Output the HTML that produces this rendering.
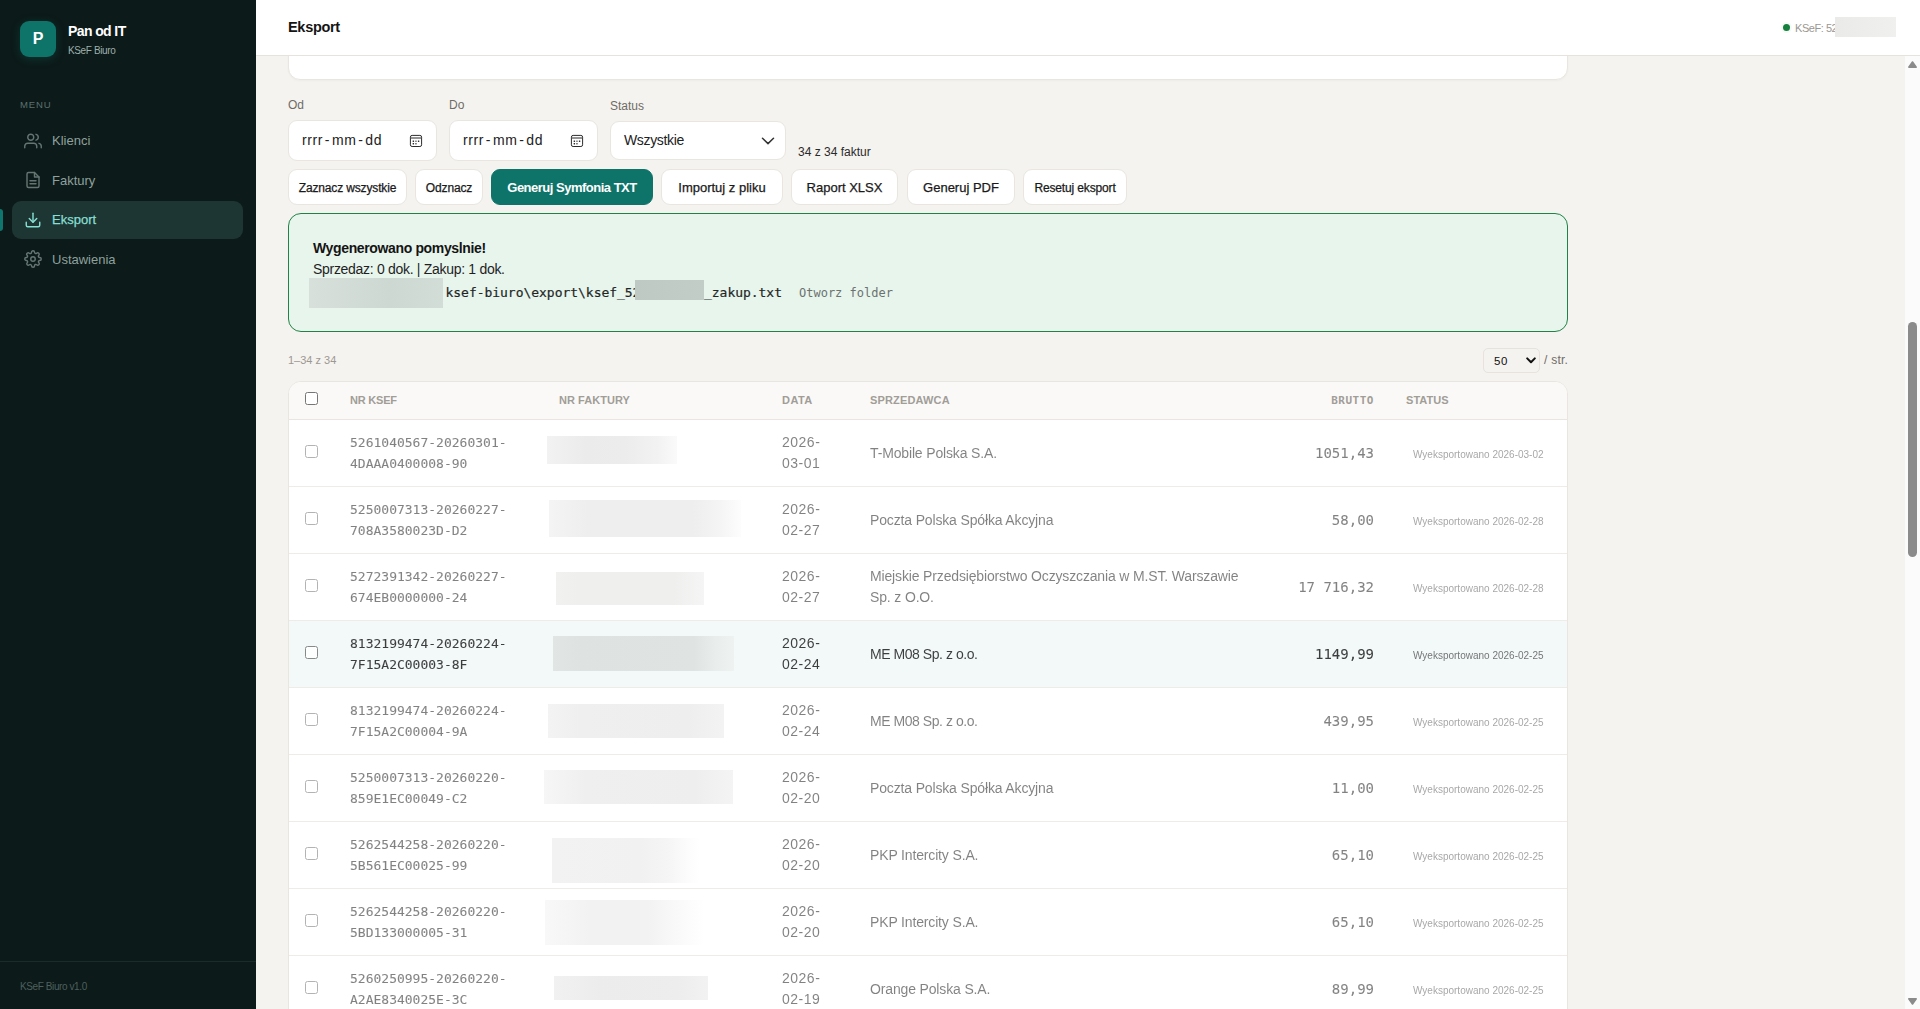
<!DOCTYPE html>
<html lang="pl">
<head>
<meta charset="utf-8">
<title>KSeF Biuro - Eksport</title>
<style>
*{box-sizing:border-box;margin:0;padding:0}
html,body{width:1920px;height:1009px;overflow:hidden}
body{position:relative;background:#f5f3ef;font-family:"Liberation Sans",sans-serif;color:#1a1a1a;font-size:14px}
.abs{position:absolute;white-space:nowrap}
.mono{font-family:"DejaVu Sans Mono","Liberation Mono",monospace}

/* sidebar */
#side{position:absolute;left:0;top:0;width:256px;height:1009px;background:#0c1a19}
#logo{position:absolute;left:20px;top:21px;width:36px;height:36px;border-radius:9px;background:#0e7369;color:#fff;font-weight:700;font-size:16px;line-height:35px;text-align:center;box-shadow:0 2px 10px rgba(15,118,110,.3)}
#brand{left:68px;top:21.5px;font-size:14px;font-weight:700;color:#fff;line-height:18px;letter-spacing:-.6px}
#brand2{left:68px;top:44.5px;font-size:10px;color:#9db0ac;line-height:12px;letter-spacing:-.38px}
#menu{left:20px;top:98.5px;font-size:9.5px;letter-spacing:.85px;color:#5d716e;line-height:12px}
.nav{position:absolute;left:12px;width:231px;height:38px;border-radius:9px;color:#8ea19d;font-size:13px;line-height:38px;padding-left:40px}
.nav svg{position:absolute;left:12px;top:10px;width:18px;height:18px;fill:none;stroke:currentColor;stroke-width:1.9;stroke-linecap:round;stroke-linejoin:round;opacity:.68}
.nav.act svg{opacity:1}
.nav.act{background:#1d3533;color:#86dfd2;font-weight:400;-webkit-text-stroke:.25px #86dfd2}
#bar{position:absolute;left:0;top:209px;width:3px;height:22px;background:#0f766e;border-radius:0 3px 3px 0}
#sfoot{position:absolute;left:0;top:961px;width:256px;height:48px;border-top:1px solid #1a2c2a}
#sfoot span{position:absolute;left:20px;top:18.5px;font-size:10px;color:#4d605d;line-height:12px;letter-spacing:-.4px}

/* header */
#head{position:absolute;left:256px;top:0;width:1664px;height:56px;background:#fff;border-bottom:1px solid #e6e2dc}
#title{left:32px;top:17px;font-size:14.5px;font-weight:700;line-height:20px;color:#151515;letter-spacing:-.3px}
#dot{position:absolute;left:1527px;top:24px;width:7px;height:7px;border-radius:50%;background:#15803d;box-shadow:0 0 0 2px rgba(21,128,61,.04)}
#ksef{left:1539px;top:20.5px;font-size:11px;line-height:14px;color:#9a9792;letter-spacing:-.45px}
#kblur{position:absolute;left:1579px;top:17px;width:61px;height:20px;background:linear-gradient(90deg,#eaeae8,#f0f0ef)}

/* scrollbar */
#sb{position:absolute;left:1905px;top:56px;width:15px;height:953px;background:#fbfbfb}
#sb svg{position:absolute;left:3px;width:9px;height:7px;fill:#8b8b8b;stroke:#8b8b8b;stroke-width:1.6;stroke-linejoin:round}
#sb b{position:absolute;left:3px;top:266px;width:9px;height:235px;border-radius:5px;background:#8b8b8b}

/* top card */
#card0{position:absolute;left:288px;top:40px;width:1280px;height:40px;background:#fff;border:1px solid #e9e6e0;border-radius:12px;box-shadow:0 1px 2px rgba(0,0,0,.03)}

/* filters */
.lbl{font-size:12px;line-height:14px;color:#6f6b66}
.inp{position:absolute;height:41px;background:#fff;border:1px solid #e9e6e0;border-radius:9px}
.inp span{position:absolute;left:13px;top:11px;font-size:14px;line-height:16px;color:#222;letter-spacing:.6px;white-space:nowrap}
.inp span i{font-style:normal;margin:0 1.8px}
.inp svg{position:absolute;left:120px;top:13px;width:14px;height:14px}
.btn{position:absolute;top:169px;height:36px;padding-top:1px;background:#fff;border:1px solid #e9e6e0;border-radius:9px;font-size:13px;line-height:34px;text-align:center;color:#1a1a1a;white-space:nowrap;-webkit-text-stroke:.25px #1a1a1a}
.btn.sm{font-size:12px;letter-spacing:-.15px}
.btn.pri{background:#0e746a;border-color:#0e746a;color:#fff;font-weight:700;letter-spacing:-.5px;-webkit-text-stroke:0}

/* success box */
#ok{position:absolute;left:288px;top:213px;width:1280px;height:119px;border:1px solid #1f8346;border-radius:13px;background:#e8f5ed}
#ok .t1{left:24px;top:25px;font-size:14px;font-weight:700;line-height:18px;color:#141414;letter-spacing:-.36px}
#ok .t2{left:24px;top:46px;font-size:14px;line-height:18px;color:#1f1f1f;letter-spacing:-.3px}
#ok .t3{top:70px;font-size:13px;line-height:18px;color:#1f2725;letter-spacing:-.03px;-webkit-text-stroke:.2px #1f2725}
#ok .t4{left:510px;top:70px;font-size:12px;line-height:18px;color:#6b726f}
.gb{position:absolute;background:#d2dcd5}

/* pager */
#pg1{left:288px;top:353px;font-size:11px;line-height:14px;color:#9c9892}
#sel{position:absolute;left:1483px;top:348px;width:57px;height:25px;border:1px solid #e6e3dd;border-radius:5px;background:#f5f3ef}
#sel span{position:absolute;left:10px;top:4.5px;font-size:11.5px;line-height:14px;color:#111;letter-spacing:.5px}
#sel svg{position:absolute;left:42px;top:8px;width:10px;height:7px}
#pg2{left:1544px;top:353px;font-size:12px;line-height:14px;color:#6f6b66;letter-spacing:.25px}

/* table */
#tbl{position:absolute;left:288px;top:381px;width:1280px;height:700px;background:#fff;border:1px solid #e9e6e0;border-radius:13px;overflow:hidden}
#th{position:absolute;left:0;top:0;width:1278px;height:38px;background:#faf9f7;border-bottom:1px solid #e9e5df}
#th span{position:absolute;top:12px;font-size:11px;font-weight:700;line-height:12px;color:#a19d97;letter-spacing:.45px;white-space:nowrap}
.cb{position:absolute;left:16px;top:25px;width:13px;height:13px;border:1px solid #767676;border-radius:2.5px;background:#fff}
.row{position:absolute;left:0;width:1278px;height:67px;border-bottom:1px solid #efece7}
.row > div,.row > .cb{opacity:.55;will-change:opacity}
.row.hov{background:#f3f9f9}
.row.hov > div,.row.hov > .cb{opacity:.85}
.row > div{position:absolute;white-space:nowrap;color:#1c1c1c}
.ksef{left:61px;top:12px;font-family:"DejaVu Sans Mono","Liberation Mono",monospace;font-size:13px;line-height:21px;-webkit-text-stroke:.1px #1c1c1c}
.date{left:493px;top:12px;font-size:14px;line-height:21px;letter-spacing:.5px}
.seller{left:581px;font-size:14px;line-height:21px;letter-spacing:-.15px}
.seller.one{top:23px}
.seller.two{top:12px}
.brutto{right:193px;top:23px;font-family:"DejaVu Sans Mono","Liberation Mono",monospace;font-size:14px;line-height:21px;text-align:right;-webkit-text-stroke:.1px #1c1c1c}
.stat{left:1124px;top:28px;font-size:10px;line-height:14px;color:#5e5e5e !important;letter-spacing:0}
.blur{position:absolute}
</style>
</head>
<body>

<div id="card0"></div>

<div id="head">
  <div class="abs" id="title">Eksport</div>
  <span id="dot"></span>
  <div class="abs" id="ksef">KSeF: 52</div>
  <span id="kblur"></span>
</div>

<div id="side">
  <div id="logo">P</div>
  <div class="abs" id="brand">Pan od IT</div>
  <div class="abs" id="brand2">KSeF Biuro</div>
  <div class="abs" id="menu">MENU</div>
  <div class="nav" style="top:122px"><svg viewBox="0 0 24 24"><path d="M17 21v-2a4 4 0 0 0-4-4H5a4 4 0 0 0-4 4v2"/><circle cx="9" cy="7" r="4"/><path d="M23 21v-2a4 4 0 0 0-3-3.87"/><path d="M16 3.13a4 4 0 0 1 0 7.75"/></svg>Klienci</div>
  <div class="nav" style="top:161px"><svg viewBox="0 0 24 24"><path d="M14 2H6a2 2 0 0 0-2 2v16a2 2 0 0 0 2 2h12a2 2 0 0 0 2-2V8z"/><path d="M14 2v6h6"/><path d="M16 13H8"/><path d="M16 17H8"/></svg><span style="position:relative;top:1px">Faktury</span></div>
  <div class="nav act" style="top:201px"><svg viewBox="0 0 24 24"><path d="M21 15v4a2 2 0 0 1-2 2H5a2 2 0 0 1-2-2v-4"/><path d="M7 10l5 5 5-5"/><path d="M12 15V3"/></svg>Eksport</div>
  <div class="nav" style="top:240.5px"><svg viewBox="0 0 24 24" style="top:9px"><circle cx="12" cy="12" r="3"/><path d="M19.4 15a1.65 1.65 0 0 0 .33 1.82l.06.06a2 2 0 1 1-2.83 2.83l-.06-.06a1.65 1.65 0 0 0-1.82-.33 1.65 1.65 0 0 0-1 1.51V21a2 2 0 1 1-4 0v-.09A1.65 1.65 0 0 0 9 19.4a1.65 1.65 0 0 0-1.82.33l-.06.06a2 2 0 1 1-2.83-2.83l.06-.06a1.65 1.65 0 0 0 .33-1.82 1.65 1.65 0 0 0-1.51-1H3a2 2 0 1 1 0-4h.09A1.65 1.65 0 0 0 4.6 9a1.65 1.65 0 0 0-.33-1.82l-.06-.06a2 2 0 1 1 2.83-2.83l.06.06a1.65 1.65 0 0 0 1.82.33H9a1.65 1.65 0 0 0 1-1.51V3a2 2 0 1 1 4 0v.09a1.65 1.65 0 0 0 1 1.51 1.65 1.65 0 0 0 1.82-.33l.06-.06a2 2 0 1 1 2.83 2.83l-.06.06a1.65 1.65 0 0 0-.33 1.82V9a1.65 1.65 0 0 0 1.51 1H21a2 2 0 1 1 0 4h-.09a1.65 1.65 0 0 0-1.51 1z"/></svg>Ustawienia</div>
  <span id="bar"></span>
  <div id="sfoot"><span>KSeF Biuro v1.0</span></div>
</div>

<!-- filters -->
<div class="abs lbl" style="left:288px;top:98px">Od</div>
<div class="abs lbl" style="left:449px;top:98px">Do</div>
<div class="abs lbl" style="left:610px;top:99px">Status</div>
<div class="inp" style="left:288px;top:120px;width:149px"><span>rrrr<i>-</i>mm<i>-</i>dd</span><svg viewBox="0 0 14 14"><rect x="1.4" y="1.4" width="11.2" height="11.1" rx="1.7" fill="none" stroke="#2b2b2b" stroke-width="1"/><rect x="1.9" y="3.2" width="10.2" height="1.6" fill="#7a7a7a"/><g fill="#2b2b2b"><rect x="3.6" y="6.4" width="1.5" height="1.6" rx=".4"/><rect x="6.2" y="6.4" width="1.5" height="1.6" rx=".4" fill="#666"/><rect x="8.85" y="6.4" width="1.5" height="1.6" rx=".4"/><rect x="3.6" y="8.9" width="1.5" height="1.6" rx=".4"/><rect x="6.2" y="8.9" width="1.5" height="1.6" rx=".4" fill="#555"/></g></svg></div>
<div class="inp" style="left:449px;top:120px;width:149px"><span>rrrr<i>-</i>mm<i>-</i>dd</span><svg viewBox="0 0 14 14"><rect x="1.4" y="1.4" width="11.2" height="11.1" rx="1.7" fill="none" stroke="#2b2b2b" stroke-width="1"/><rect x="1.9" y="3.2" width="10.2" height="1.6" fill="#7a7a7a"/><g fill="#2b2b2b"><rect x="3.6" y="6.4" width="1.5" height="1.6" rx=".4"/><rect x="6.2" y="6.4" width="1.5" height="1.6" rx=".4" fill="#666"/><rect x="8.85" y="6.4" width="1.5" height="1.6" rx=".4"/><rect x="3.6" y="8.9" width="1.5" height="1.6" rx=".4"/><rect x="6.2" y="8.9" width="1.5" height="1.6" rx=".4" fill="#555"/></g></svg></div>
<div class="inp" style="left:610px;top:121px;width:176px;height:39px"><span style="letter-spacing:-.35px;left:13px;top:10px">Wszystkie</span><svg viewBox="0 0 14 8" style="left:150px;top:15px;width:14px;height:8px"><path d="M1.5 1.2 7 6.6l5.5-5.4" fill="none" stroke="#333" stroke-width="1.5" stroke-linecap="round" stroke-linejoin="round"/></svg></div>
<div class="abs" style="left:798px;top:145px;font-size:12px;line-height:14px;color:#2a2a2a">34 z 34 faktur</div>

<div class="btn sm" style="left:288px;width:119px">Zaznacz wszystkie</div>
<div class="btn sm" style="left:415px;width:68px">Odznacz</div>
<div class="btn pri" style="left:491px;width:162px">Generuj Symfonia TXT</div>
<div class="btn" style="left:661px;width:122px">Importuj z pliku</div>
<div class="btn" style="left:791px;width:107px">Raport XLSX</div>
<div class="btn" style="left:907px;width:108px">Generuj PDF</div>
<div class="btn sm" style="left:1023px;width:104px">Resetuj eksport</div>

<!-- success -->
<div id="ok">
  <div class="abs t1">Wygenerowano pomyslnie!</div>
  <div class="abs t2">Sprzedaz: 0 dok. | Zakup: 1 dok.</div>
  <div class="abs t3 mono" style="left:156.5px">ksef-biuro\export\ksef_52</div>
  <div class="abs t3 mono" style="left:415px">_zakup.txt</div>
  <div class="abs t4 mono">Otworz folder</div>
  <span class="gb" style="left:20px;top:64px;width:134px;height:30px;background:linear-gradient(90deg,#d7e0da,#ced8d2 60%,#d3ddd7)"></span>
  <span class="gb" style="left:346px;top:66px;width:69px;height:20px;background:linear-gradient(90deg,#bfc9c3,#c3cdc7)"></span>
</div>

<!-- pager -->
<div class="abs" id="pg1">1–34 z 34</div>
<div id="sel"><span>50</span><svg viewBox="0 0 10 7"><path d="M1.2 1.4 5 5.3l3.8-3.9" fill="none" stroke="#111" stroke-width="2" stroke-linecap="round" stroke-linejoin="round"/></svg></div>
<div class="abs" id="pg2">/ str.</div>

<!-- table -->
<div id="tbl">
  <div id="th">
    <span class="cb" style="top:10px;left:16px;position:absolute"></span>
    <span style="left:61px;letter-spacing:-.2px">NR KSEF</span>
    <span style="left:270px;letter-spacing:.05px">NR FAKTURY</span>
    <span style="left:493px">DATA</span>
    <span style="left:581px;letter-spacing:.15px">SPRZEDAWCA</span>
    <span class="mono" style="right:193px;top:13px;letter-spacing:.5px;font-weight:700">BRUTTO</span>
    <span style="left:1117px;letter-spacing:.05px">STATUS</span>
  </div>
<div class="row" style="top:38px"><span class="cb"></span><div class="ksef">5261040567-20260301-<br>4DAAA0400008-90</div><span class="blur" style="left:258px;top:16px;width:130px;height:28px;background:linear-gradient(90deg,#f2f2f2 0,#ebebeb 30%,#ececec 60%,#f2f2f2 85%,#fafafa 100%)"></span><div class="date">2026-<br>03-01</div><div class="seller one">T-Mobile Polska S.A.</div><div class="brutto">1051,43</div><div class="stat">Wyeksportowano 2026-03-02</div></div>
<div class="row" style="top:105px"><span class="cb"></span><div class="ksef">5250007313-20260227-<br>708A3580023D-D2</div><span class="blur" style="left:260px;top:13px;width:192px;height:37px;background:linear-gradient(90deg,#f4f4f4 0,#eeeeee 20%,#eeeeee 75%,#f5f5f5 90%,#fdfdfd 100%)"></span><div class="date">2026-<br>02-27</div><div class="seller one">Poczta Polska Spółka Akcyjna</div><div class="brutto">58,00</div><div class="stat">Wyeksportowano 2026-02-28</div></div>
<div class="row" style="top:172px"><span class="cb"></span><div class="ksef">5272391342-20260227-<br>674EB0000000-24</div><span class="blur" style="left:267px;top:18px;width:148px;height:33px;background:linear-gradient(90deg,#f1f1f0 0,#efefee 15%,#efefee 80%,#f5f5f5 100%)"></span><div class="date">2026-<br>02-27</div><div class="seller two">Miejskie Przedsiębiorstwo Oczyszczania w M.ST. Warszawie<br>Sp. z O.O.</div><div class="brutto">17 716,32</div><div class="stat">Wyeksportowano 2026-02-28</div></div>
<div class="row hov" style="top:239px"><span class="cb"></span><div class="ksef">8132199474-20260224-<br>7F15A2C00003-8F</div><span class="blur" style="left:264px;top:15px;width:181px;height:35px;background:linear-gradient(90deg,#e1e6e5 0,#dee3e2 15%,#dfe4e3 78%,#e9eeed 90%,#eef3f2 100%)"></span><div class="date">2026-<br>02-24</div><div class="seller one" style="letter-spacing:-.45px">ME M08 Sp. z o.o.</div><div class="brutto">1149,99</div><div class="stat">Wyeksportowano 2026-02-25</div></div>
<div class="row" style="top:306px"><span class="cb"></span><div class="ksef">8132199474-20260224-<br>7F15A2C00004-9A</div><span class="blur" style="left:259px;top:16px;width:176px;height:34px;background:linear-gradient(90deg,#f3f3f3 0,#efefef 18%,#eeeeee 80%,#f3f3f3 100%)"></span><div class="date">2026-<br>02-24</div><div class="seller one" style="letter-spacing:-.45px">ME M08 Sp. z o.o.</div><div class="brutto">439,95</div><div class="stat">Wyeksportowano 2026-02-25</div></div>
<div class="row" style="top:373px"><span class="cb"></span><div class="ksef">5250007313-20260220-<br>859E1EC00049-C2</div><span class="blur" style="left:255px;top:15px;width:189px;height:34px;background:linear-gradient(90deg,#f6f6f6 0,#efefef 22%,#eeeeee 80%,#f4f4f4 100%)"></span><div class="date">2026-<br>02-20</div><div class="seller one">Poczta Polska Spółka Akcyjna</div><div class="brutto">11,00</div><div class="stat">Wyeksportowano 2026-02-25</div></div>
<div class="row" style="top:440px"><span class="cb"></span><div class="ksef">5262544258-20260220-<br>5B561EC00025-99</div><span class="blur" style="left:263px;top:16px;width:148px;height:45px;background:linear-gradient(90deg,#f2f2f2 0,#f1f1f1 60%,#f5f5f5 78%,#fcfcfc 92%,#ffffff 100%)"></span><div class="date">2026-<br>02-20</div><div class="seller one">PKP Intercity S.A.</div><div class="brutto">65,10</div><div class="stat">Wyeksportowano 2026-02-25</div></div>
<div class="row" style="top:507px"><span class="cb"></span><div class="ksef">5262544258-20260220-<br>5BD133000005-31</div><span class="blur" style="left:256px;top:11px;width:159px;height:45px;background:linear-gradient(90deg,#f8f8f8 0,#f2f2f2 28%,#f2f2f2 65%,#f8f8f8 80%,#ffffff 100%)"></span><div class="date">2026-<br>02-20</div><div class="seller one">PKP Intercity S.A.</div><div class="brutto">65,10</div><div class="stat">Wyeksportowano 2026-02-25</div></div>
<div class="row" style="top:574px"><span class="cb"></span><div class="ksef">5260250995-20260220-<br>A2AE8340025E-3C</div><span class="blur" style="left:265px;top:20px;width:154px;height:24px;background:linear-gradient(90deg,#f1f1f1 0,#ececec 30%,#ededed 80%,#f2f2f2 100%)"></span><div class="date">2026-<br>02-19</div><div class="seller one">Orange Polska S.A.</div><div class="brutto">89,99</div><div class="stat">Wyeksportowano 2026-02-25</div></div>
</div>

<div id="sb"><svg viewBox="0 0 9 7" style="top:5.2px"><path d="M4.5 1 8.2 6.1H.8z"/></svg><b></b><svg viewBox="0 0 9 7" style="top:942.2px"><path d="M4.5 6 8.2.9H.8z"/></svg></div>

</body>
</html>
